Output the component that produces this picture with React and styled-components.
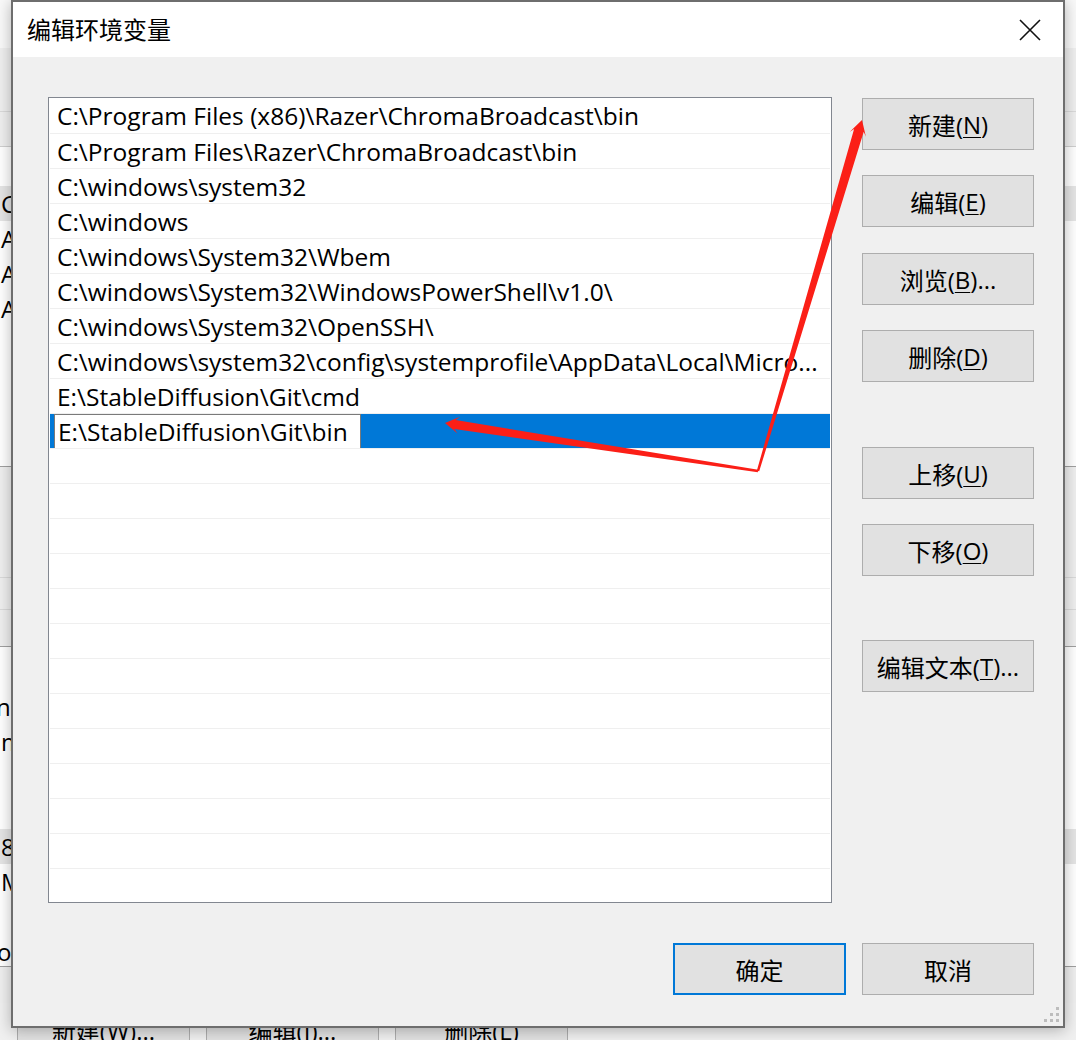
import React from "react";
import styled, { createGlobalStyle } from "styled-components";

const FONT = `"Open Sans", "Noto Sans CJK SC", sans-serif`;

const Global = createGlobalStyle`
  html, body { margin: 0; padding: 0; }
  body {
    width: 1076px; height: 1040px; overflow: hidden; background: #f0f0f0;
    font-family: ${FONT};
  }
  * { box-sizing: border-box; }
`;

const Desktop = styled.div`
  position: relative;
  width: 1076px;
  height: 1040px;
  overflow: hidden;
  background: #f0f0f0;
  font-family: ${FONT};
  color: #000;
`;

/* ---------- background window (mostly hidden) ---------- */
const BackWindow = styled.div`
  display: flex;
  flex-direction: column;
  width: 100%;
  height: 100%;
  background: #f0f0f0;
  font-size: 24px;
`;
const BgBand = styled.div`
  flex: none;
  height: ${(p) => p.$h}px;
  background: ${(p) => p.$bg || "#efefef"};
  border-bottom: ${(p) => (p.$line ? `1px solid ${p.$line}` : "none")};
`;
const BgList = styled.div`
  flex: none;
  height: ${(p) => p.$h}px;
  background: #fff;
  border-bottom: 1px solid #a0a0a0;
  padding-top: ${(p) => p.$pad}px;
  display: flex;
  flex-direction: column;
  overflow: hidden;
`;
const BgRow = styled.div`
  flex: none;
  height: 35px;
  line-height: 35px;
  white-space: nowrap;
  padding-left: 1px;
  text-indent: ${(p) => p.$indent || 0}px;
  background: ${(p) => (p.$sel ? "#e5e5e5" : "transparent")};
`;
const BgButtons = styled.div`
  flex: none;
  display: flex;
  gap: 16px;
  padding-left: 17px;
`;
const BgButton = styled.div`
  width: 173px;
  height: 52px;
  border: 1px solid #adadad;
  background: #e1e1e1;
  display: flex;
  align-items: center;
  justify-content: center;
  font-size: 24px;
`;

/* ---------- dialog ---------- */
const Dialog = styled.div`
  position: absolute;
  left: 11px;
  top: 0;
  width: 1054px;
  height: 1028px;
  border: 2px solid #6e6e6e;
  background: #f0f0f0;
  display: flex;
  flex-direction: column;
  box-shadow: 0 2px 14px rgba(0, 0, 0, 0.28);
`;
const TitleBar = styled.div`
  flex: none;
  height: 55px;
  background: #fff;
  display: flex;
  align-items: center;
  justify-content: space-between;
  padding-left: 14px;
`;
const Title = styled.div`
  font-size: 24px;
  line-height: 1;
`;
const CloseBtn = styled.div`
  width: 66px;
  height: 55px;
  display: flex;
  align-items: center;
  justify-content: center;
`;
const Body = styled.div`
  flex: 1;
  position: relative;
  display: flex;
  flex-direction: column;
  padding: 40px 29px 0 35px;
`;
const Main = styled.div`
  display: flex;
  gap: 30px;
`;
const ListBox = styled.div`
  flex: none;
  width: 784px;
  height: 806px;
  border: 1px solid #828790;
  background: #fff;
  padding: 0 1px;
  overflow: hidden;
  display: flex;
  flex-direction: column;
`;
const Row = styled.div`
  flex: none;
  height: 35px;
  border-top: ${(p) => (p.$first ? "none" : "1px solid #efefef")};
  display: flex;
  align-items: center;
  padding-left: ${(p) => (p.$sel ? 4 : 7)}px;
  background: ${(p) => (p.$sel ? "#0078d7" : "transparent")};
  font-size: 24.5px;
  white-space: nowrap;
  overflow: hidden;
`;
const EditBox = styled.div`
  width: 307px;
  height: 35px;
  border: 1px solid #7a7a7a;
  background: #fff;
  display: flex;
  align-items: center;
  padding-left: 3px;
  font-size: 24.5px;
  white-space: nowrap;
  overflow: hidden;
`;
const ButtonCol = styled.div`
  display: flex;
  flex-direction: column;
  padding-top: 1px;
`;
const Btn = styled.div`
  flex: none;
  width: ${(p) => p.$w || 172}px;
  height: 52px;
  margin-top: ${(p) => p.$mt || 0}px;
  border: ${(p) => (p.$default ? "2px solid #0078d7" : "1px solid #adadad")};
  background: #e1e1e1;
  display: flex;
  align-items: center;
  justify-content: center;
  font-size: 24px;
  white-space: nowrap;
  u { text-decoration-thickness: 1px; text-underline-offset: 3px; }
`;
const Footer = styled.div`
  display: flex;
  justify-content: flex-end;
  gap: 16px;
  margin-top: 40px;
`;
const Grip = styled.svg`
  position: absolute;
  right: 3px;
  bottom: 3px;
`;
const Overlay = styled.svg`
  position: absolute;
  left: 0;
  top: 0;
  pointer-events: none;
`;

function arrowPoints(s, t, w0, w1, headLen, headW) {
  const dx = t[0] - s[0];
  const dy = t[1] - s[1];
  const L = Math.hypot(dx, dy);
  const ux = dx / L;
  const uy = dy / L;
  const nx = -uy;
  const ny = ux;
  const neck = [t[0] - ux * headLen * 0.72, t[1] - uy * headLen * 0.72];
  const barb = [t[0] - ux * headLen, t[1] - uy * headLen];
  const p = (b, k) => `${(b[0] + nx * k).toFixed(1)},${(b[1] + ny * k).toFixed(1)}`;
  return [
    p(s, w0),
    p(neck, w1),
    p(barb, headW),
    `${t[0]},${t[1]}`,
    p(barb, -headW),
    p(neck, -w1),
    p(s, -w0),
  ].join(" ");
}

const paths = [
  "C:\\Program Files (x86)\\Razer\\ChromaBroadcast\\bin",
  "C:\\Program Files\\Razer\\ChromaBroadcast\\bin",
  "C:\\windows\\system32",
  "C:\\windows",
  "C:\\windows\\System32\\Wbem",
  "C:\\windows\\System32\\WindowsPowerShell\\v1.0\\",
  "C:\\windows\\System32\\OpenSSH\\",
  "C:\\windows\\system32\\config\\systemprofile\\AppData\\Local\\Micro...",
  "E:\\StableDiffusion\\Git\\cmd",
];

const sideButtons = [
  { label: "新建", key: "N", mt: 0 },
  { label: "编辑", key: "E", mt: 25 },
  { label: "浏览", key: "B", mt: 26, tail: "..." },
  { label: "删除", key: "D", mt: 25 },
  { label: "上移", key: "U", mt: 65 },
  { label: "下移", key: "O", mt: 25 },
  { label: "编辑文本", key: "T", mt: 64, tail: "..." },
];

export default function App() {
  const emptyRows = Array.from({ length: 13 });
  return (
    <Desktop>
      <Global />
      <BackWindow>
        <BgBand $h={48} $bg="#f9f9f9" />
        <BgBand $h={64} $line="#dadada" />
        <BgBand $h={35} $line="#cfcfcf" />
        <BgList $h={320} $pad={4}>
          <BgRow />
          <BgRow $sel>C:\Users\Public</BgRow>
          <BgRow>AppData\Local</BgRow>
          <BgRow>AppData\Local\Temp</BgRow>
          <BgRow>AppData\Local\Temp</BgRow>
        </BgList>
        <BgBand $h={111} $line="#dadada" />
        <BgBand $h={32} $line="#dadada" />
        <BgBand $h={37} $line="#a0a0a0" />
        <BgList $h={320} $pad={7}>
          <BgRow />
          <BgRow $indent={-5}>n32</BgRow>
          <BgRow>mdata</BgRow>
          <BgRow />
          <BgRow />
          <BgRow $sel>8664</BgRow>
          <BgRow>MD64</BgRow>
          <BgRow />
          <BgRow $indent={-4}>ocs</BgRow>
        </BgList>
        <BgBand $h={36} />
        <BgButtons>
          <BgButton>新建(W)...</BgButton>
          <BgButton>编辑(I)...</BgButton>
          <BgButton>删除(L)</BgButton>
        </BgButtons>
      </BackWindow>

      <Dialog>
        <TitleBar>
          <Title>编辑环境变量</Title>
          <CloseBtn>
            <svg width="22" height="22" viewBox="0 0 22 22">
              <path d="M1 1 L21 21 M21 1 L1 21" stroke="#111" strokeWidth="1.6" fill="none" />
            </svg>
          </CloseBtn>
        </TitleBar>
        <Body>
          <Main>
            <ListBox>
              {paths.map((t, i) => (
                <Row key={i} $first={i === 0}>
                  {t}
                </Row>
              ))}
              <Row $sel>
                <EditBox>E:\StableDiffusion\Git\bin</EditBox>
              </Row>
              {emptyRows.map((_, i) => (
                <Row key={"e" + i} />
              ))}
            </ListBox>
            <ButtonCol>
              {sideButtons.map((b) => (
                <Btn key={b.key} $mt={b.mt}>
                  {b.label}(<u>{b.key}</u>){b.tail || ""}
                </Btn>
              ))}
            </ButtonCol>
          </Main>
          <Footer>
            <Btn $default $w={173}>确定</Btn>
            <Btn>取消</Btn>
          </Footer>
          <Grip width="17" height="17" viewBox="0 0 17 17">
            <g fill="#bdbdbd">
              <rect x="13" y="1" width="3" height="3" />
              <rect x="7" y="7" width="3" height="3" />
              <rect x="13" y="7" width="3" height="3" />
              <rect x="1" y="13" width="3" height="3" />
              <rect x="7" y="13" width="3" height="3" />
              <rect x="13" y="13" width="3" height="3" />
            </g>
          </Grip>
        </Body>
      </Dialog>

      <Overlay width="1076" height="1040" viewBox="0 0 1076 1040">
        <polygon points={arrowPoints([758, 471], [862, 120], 1.2, 5, 15, 8.5)} fill="#fb1f17" />
        <polygon points={arrowPoints([758, 471], [445, 423], 1.2, 4.5, 14, 8.5)} fill="#fb1f17" />
      </Overlay>
    </Desktop>
  );
}
